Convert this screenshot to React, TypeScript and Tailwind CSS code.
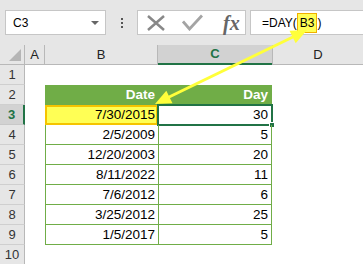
import React from "react";

const rows = [
  { n: 3, date: "7/30/2015", day: "30" },
  { n: 4, date: "2/5/2009", day: "5" },
  { n: 5, date: "12/20/2003", day: "20" },
  { n: 6, date: "8/11/2022", day: "11" },
  { n: 7, date: "7/6/2012", day: "6" },
  { n: 8, date: "3/25/2012", day: "25" },
  { n: 9, date: "1/5/2017", day: "5" },
];

function RowHead({ n, active }: { n: number; active?: boolean }) {
  return (
    <div
      className={
        active
          ? "flex w-[25px] items-center justify-center border-b border-b-[#c8c8c8] border-r-2 border-r-[#217346] bg-[#d2d2d2] text-[13px] font-bold text-[#217346]"
          : "flex w-[25px] items-center justify-center border-b border-r border-b-[#cfcfcf] border-r-[#b8b8b8] bg-[#e6e6e6] text-[13px] text-[#333]"
      }
    >
      {n}
    </div>
  );
}

export default function App() {
  return (
    <div className="relative h-[264px] w-[363px] overflow-hidden bg-white font-['Liberation_Sans',Arial,sans-serif] text-black">
      {/* formula bar */}
      <div className="flex h-[45px] items-start bg-[#e6e6e6] pl-[5px] pt-[10px]">
        <div className="flex h-[25px] w-[101px] items-center justify-between border border-[#c6c6c6] bg-white pl-[7px] pr-[6px]">
          <span className="text-[12px] leading-none">C3</span>
          <span className="h-0 w-0 border-l-[4px] border-r-[4px] border-t-[4px] border-l-transparent border-r-transparent border-t-[#666]" />
        </div>
        <div className="flex h-[25px] w-[31px] flex-col items-center justify-center gap-[2px]">
          <span className="h-[2px] w-[2px] bg-[#555]" />
          <span className="h-[2px] w-[2px] bg-[#555]" />
          <span className="h-[2px] w-[2px] bg-[#555]" />
        </div>
        <div className="flex h-[25px] w-[109px] items-center border border-[#c6c6c6] bg-white pl-[9px]">
          <svg width="18" height="16" viewBox="0 0 18 16">
            <path d="M1 1 L17 15 M17 1 L1 15" stroke="#888" strokeWidth="2.5" fill="none" />
          </svg>
          <svg className="ml-[17px]" width="21" height="17" viewBox="0 0 21 17">
            <path d="M1 7.5 L7.5 15 L20 1.5" stroke="#a4a4a4" strokeWidth="2.8" fill="none" />
          </svg>
          <span className="ml-[20px] font-['Liberation_Serif',serif] text-[20px] font-bold italic leading-none text-[#666]">
            fx
          </span>
        </div>
        <div className="ml-[4px] flex h-[25px] flex-1 items-center border border-r-0 border-[#c6c6c6] bg-white pl-[11px] text-[12px]">
          <span>=DAY(</span>
          <span className="flex h-[20px] items-center border border-[#f0b000] bg-[#ffff55] px-[2px]">B3</span>
          <span>)</span>
        </div>
      </div>

      {/* column headers */}
      <div className="flex h-[20px] text-[13px] text-[#222]">
        <div className="flex w-[25px] items-end justify-end border-b border-r border-[#b8b8b8] bg-[#e6e6e6] pb-[3px] pr-[3px]">
          <span className="h-0 w-0 border-b-[12px] border-l-[12px] border-b-[#b5b5b5] border-l-transparent" />
        </div>
        <div className="flex w-[20px] items-center justify-center border-b border-r border-[#b8b8b8] bg-[#e6e6e6]">A</div>
        <div className="flex w-[113px] items-center justify-center border-b border-r border-[#b8b8b8] bg-[#e6e6e6]">B</div>
        <div className="flex w-[114px] items-center justify-center border-b-2 border-b-[#217346] bg-[#d2d2d2] font-bold text-[#217346]">
          C
        </div>
        <div className="flex flex-1 items-center justify-center border-b border-l border-[#b8b8b8] bg-[#e6e6e6]">D</div>
      </div>

      {/* row 1 */}
      <div className="flex h-[20px]">
        <RowHead n={1} />
      </div>

      {/* row 2 header */}
      <div className="flex h-[20px] text-[13.5px]">
        <RowHead n={2} />
        <div className="w-[20px]" />
        <div className="flex w-[227px] bg-[#70ad47] font-bold leading-[20px] text-white">
          <div className="w-[113px] pr-[3px] text-right">Date</div>
          <div className="w-[114px] pr-[4px] text-right">Day</div>
        </div>
      </div>

      {/* data rows */}
      {rows.map((r) => (
        <div key={r.n} className="flex h-[20px] text-[13.5px] leading-[20px]">
          <RowHead n={r.n} active={r.n === 3} />
          <div className="w-[20px]" />
          {r.n === 3 ? (
            <div className="w-[113px] bg-[#ffff55] pr-[3px] text-right shadow-[inset_0_0_0_2px_#f5c400]">{r.date}</div>
          ) : (
            <div className="w-[113px] border-b border-l border-[#70ad47] pr-[3px] text-right">{r.date}</div>
          )}
          <div className="relative w-[114px] border-b border-l border-r border-[#70ad47] pr-[3px] text-right">
            {r.day}
            {r.n === 3 && (
              <>
                <div className="absolute -left-[2px] -top-[1px] h-[22px] w-[116px] border-2 border-[#217346]" />
                <div className="absolute -bottom-[4px] -right-[4px] h-[6px] w-[6px] border border-white bg-[#217346]" />
              </>
            )}
          </div>
        </div>
      ))}

      {/* row 10 */}
      <div className="flex h-[20px]">
        <RowHead n={10} />
      </div>

      {/* annotation arrow */}
      <svg className="pointer-events-none absolute left-0 top-0" width="363" height="264" viewBox="0 0 363 264">
        <line x1="166" y1="98.5" x2="296" y2="35.5" stroke="#ffff3a" strokeWidth="3" />
        <polygon points="155,104 172.5,103.3 166.3,90.7" fill="#ffff3a" />
        <polygon points="307,30 295.7,43.3 289.5,30.7" fill="#ffff3a" />
      </svg>
    </div>
  );
}
